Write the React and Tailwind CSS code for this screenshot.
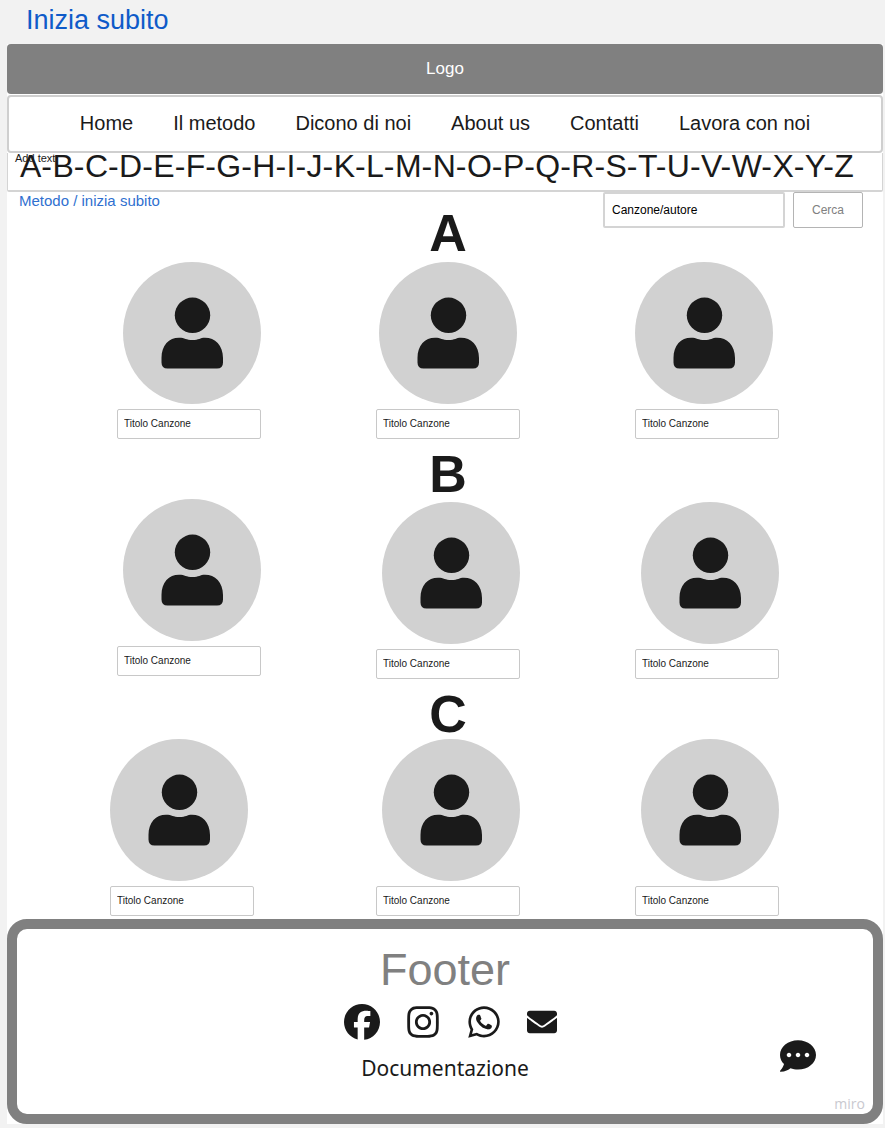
import React from "react";
import { FaCommentDots, FaEnvelope, FaInstagram, FaWhatsapp } from "react-icons/fa";
import { FaFacebook } from "react-icons/fa6";

const NAV = ["Home", "Il metodo", "Dicono di noi", "About us", "Contatti", "Lavora con noi"];
const LETTERS = "ABCDEFGHIJKLMNOPQRSTUVWXYZ".split("");

const SECTIONS = [
  {
    letter: "A",
    heading: "mb-1.5",
    row: "pl-[110px]",
    songs: ["items-end", "items-center", "items-start"],
  },
  {
    letter: "B",
    heading: "mb-0.5",
    row: "pl-[110px]",
    songs: ["items-end", "items-end pt-[3px]", "items-end pt-[3px]"],
  },
  {
    letter: "C",
    heading: "mb-0.5",
    row: "pl-[103px]",
    songs: ["items-start mr-[7px]", "items-end", "items-end"],
  },
];

function Person() {
  return (
    <svg viewBox="0 0 62 72" className="h-[72px] w-[62px] fill-[#1a1a1a]" aria-hidden="true">
      <circle cx="31.5" cy="18.3" r="17.7" />
      <path d="M0.5 61C0.5 48 8 40.7 18 40.7C24 40.7 25 43 31.5 43C38 43 39 40.7 44 40.7C54 40.7 62 48 62 61V65.5Q62 71.5 56 71.5H6.5Q0.5 71.5 0.5 65.5Z" />
    </svg>
  );
}

function Song({ label, className }) {
  return (
    <li className={`flex w-36 flex-col gap-[5px] ${className}`}>
      <div className="flex h-[142px] w-[138px] items-center justify-center rounded-[50%] bg-[#d1d1d1]">
        <Person />
      </div>
      <input
        aria-label={label}
        defaultValue="Titolo Canzone"
        className="h-[30px] w-full rounded-xs border border-[#c8c8c8] bg-white px-1.5 pb-0.5 text-[10px] text-[#1a1a1a]"
      />
    </li>
  );
}

function Section({ letter, heading, row, songs }) {
  return (
    <section>
      <h2 className={`pl-1.5 text-center text-[52px] leading-[46px] font-bold ${heading}`}>{letter}</h2>
      <ul className={`flex justify-between pr-[104px] ${row}`}>
        {songs.map((align, i) => (
          <Song key={i} label={`Canzone ${letter} ${i + 1}`} className={align} />
        ))}
      </ul>
    </section>
  );
}

export default function App() {
  return (
    <div className="min-h-screen bg-[#f2f2f2] pr-0.5 pl-[7px] font-['Liberation_Sans',Arial,sans-serif] text-[#1a1a1a]">
      <h1 className="px-[19px] pt-1 pb-2 text-[27px] leading-8 text-[#0f5bc9]">Inizia subito</h1>

      <div className="bg-white">
        <header>
          <div className="flex h-[50px] items-center justify-center rounded-sm bg-[#808080] text-[17px] text-white">
            Logo
          </div>
          <nav className="mt-px flex h-[58px] items-center justify-center gap-10 rounded-sm border-2 border-[#cfcfcf] pb-0.5 text-xl">
            {NAV.map((item) => (
              <a key={item} href="#" className="whitespace-nowrap">
                {item}
              </a>
            ))}
          </nav>
          <div className="relative h-[39px] rounded-b-xs border-x border-b-2 border-[#d4d4d4] pr-7 pl-3 text-[32px] leading-[27px]">
            <span className="absolute -top-px left-[7px] text-[11px] leading-3">Add text</span>
            <ul className="flex justify-between">
              {LETTERS.map((l, i) => (
                <li key={l}>
                  <a href={`#${l}`}>{l}</a>
                  {i < LETTERS.length - 1 && "-"}
                </li>
              ))}
            </ul>
          </div>
        </header>

        <div className="flex items-start justify-between pr-5 pl-3">
          <a href="#" className="text-[15px] leading-[18px] text-[#2f70d0]">
            Metodo / inizia subito
          </a>
          <form className="flex gap-2 text-xs" onSubmit={(e) => e.preventDefault()}>
            <input
              aria-label="Canzone/autore"
              defaultValue="Canzone/autore"
              className="h-9 w-[182px] rounded-xs border-2 border-[#d4d4d4] bg-white px-[7px] text-black"
            />
            <button className="h-9 w-[70px] rounded-xs border border-[#b4b4b4] bg-white text-[#808080]">
              Cerca
            </button>
          </form>
        </div>

        <main className="-mt-[18px] flex flex-col gap-3 pb-[3px]">
          {SECTIONS.map((s) => (
            <Section key={s.letter} {...s} />
          ))}
        </main>

        <footer className="relative flex flex-col items-center rounded-[20px] border-10 border-[#808080] bg-white pt-[17px] pb-8">
          <h2 className="text-[45px] leading-[48px] text-[#808080]">Footer</h2>
          <div className="mt-2.5 flex items-center gap-[25px] pl-2.5">
            <a href="#" aria-label="Facebook">
              <FaFacebook size={36} />
            </a>
            <a href="#" aria-label="Instagram">
              <FaInstagram size={36} />
            </a>
            <a href="#" aria-label="WhatsApp">
              <FaWhatsapp size={36} />
            </a>
            <a href="#" aria-label="Email">
              <FaEnvelope size={30} />
            </a>
          </div>
          <a href="#" className="mt-3.5 font-['Noto_Sans',sans-serif] text-[21px] leading-7">
            Documentazione
          </a>
          <button aria-label="Chat" className="absolute right-[57px] bottom-10">
            <FaCommentDots size={36} />
          </button>
          <span className="absolute right-2 bottom-0 font-['Open_Sans',sans-serif] text-sm leading-5 text-[#c9c9cf]">
            miro
          </span>
        </footer>
      </div>
    </div>
  );
}
